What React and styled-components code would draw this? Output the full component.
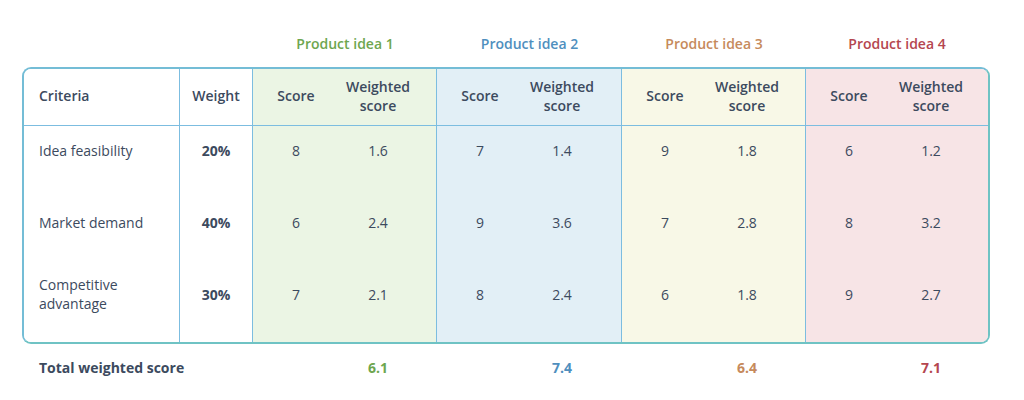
import styled, { createGlobalStyle } from 'styled-components';

const ideas = [
  { name: 'Product idea 1', text: '#6ea64f', bg: '#ebf5e4', scores: [8, 6, 7], weighted: ['1.6', '2.4', '2.1'], total: '6.1' },
  { name: 'Product idea 2', text: '#4f8fbe', bg: '#e2eff6', scores: [7, 9, 8], weighted: ['1.4', '3.6', '2.4'], total: '7.4' },
  { name: 'Product idea 3', text: '#c68a5c', bg: '#f8f8e7', scores: [9, 7, 6], weighted: ['1.8', '2.8', '1.8'], total: '6.4' },
  { name: 'Product idea 4', text: '#b5464f', bg: '#f7e4e6', scores: [6, 8, 9], weighted: ['1.2', '3.2', '2.7'], total: '7.1' },
];

const criteria = [
  { label: 'Idea feasibility', weight: '20%' },
  { label: 'Market demand', weight: '40%' },
  { label: 'Competitive\nadvantage', weight: '30%' },
];

function App() {
  return (
    <Page>
      <GlobalStyle />
      <Labels>
        <span />
        <span />
        {ideas.map(idea => (
          <IdeaLabel key={idea.name} color={idea.text}>
            {idea.name}
          </IdeaLabel>
        ))}
      </Labels>

      <Table>
        <HeadCell>
          <Criteria>Criteria</Criteria>
        </HeadCell>
        <HeadCell center>Weight</HeadCell>
        {ideas.map((idea, i) => (
          <HeadCell key={idea.name} tint={idea.bg} last={i === 3}>
            <Pair>
              <ScoreSlot>Score</ScoreSlot>
              <WeightedSlot>
                Weighted
                <br />
                score
              </WeightedSlot>
            </Pair>
          </HeadCell>
        ))}

        {criteria.map((row, r) => (
          <Row key={row.label}>
            <BodyCell>
              <Criteria light>{row.label}</Criteria>
            </BodyCell>
            <BodyCell center>
              <strong>{row.weight}</strong>
            </BodyCell>
            {ideas.map((idea, i) => (
              <BodyCell key={idea.name} tint={idea.bg} last={i === 3}>
                <Pair>
                  <ScoreSlot>{idea.scores[r]}</ScoreSlot>
                  <WeightedSlot>{idea.weighted[r]}</WeightedSlot>
                </Pair>
              </BodyCell>
            ))}
          </Row>
        ))}
      </Table>

      <Totals>
        <TotalLabel>Total weighted score</TotalLabel>
        <span />
        {ideas.map(idea => (
          <Pair key={idea.name}>
            <ScoreSlot />
            <TotalValue color={idea.text}>{idea.total}</TotalValue>
          </Pair>
        ))}
      </Totals>
    </Page>
  );
}

export default App;

const GlobalStyle = createGlobalStyle`
  body {
    margin: 0;
    background: #ffffff;
    font-family: "Open Sans", "Noto Sans", sans-serif;
    color: #3c4a5e;
  }
`;

const columns = '156px 73px 184px 185px 184px 182px';

const Page = styled.main`
  width: 1024px;
  height: 400px;
  padding: 34px 0 0 22px;
  box-sizing: border-box;
`;

// product labels above the table
const Labels = styled.div`
  display: grid;
  grid-template-columns: ${columns};
  width: 968px;
  padding: 0 2px;
  box-sizing: border-box;
  height: 20px;
  margin-bottom: 13px;
`;

const IdeaLabel = styled.div`
  text-align: center;
  font-size: 14px;
  font-weight: 600;
  line-height: 20px;
  color: ${props => props.color};
`;

// table
const Table = styled.section`
  display: grid;
  grid-template-columns: ${columns};
  width: 968px;
  box-sizing: border-box;
  border: 2px solid #74bdd6;
  border-right-color: #6fc3c4;
  border-bottom-color: #6fc3c4;
  border-radius: 9px;
  overflow: hidden;
  font-size: 14px;
`;

const Row = styled.div`
  display: contents;
`;

const Cell = styled.div`
  display: flex;
  align-items: center;
  justify-content: ${props => (props.center ? 'center' : 'flex-start')};
  background: ${props => props.tint || '#ffffff'};
  border-right: ${props => (props.last ? 'none' : '1.5px solid #7cbde0')};
  box-sizing: border-box;
`;

const HeadCell = styled(Cell)`
  height: 57px;
  border-bottom: 1.5px solid #7cbde0;
  font-weight: 600;
  line-height: 19px;
  padding-bottom: 3px;
`;

const BodyCell = styled(Cell)`
  height: 72px;
  padding-bottom: 24px;
  line-height: 19px;

  strong {
    font-weight: 700;
  }
`;

const Criteria = styled.div`
  padding-left: 15px;
  font-weight: ${props => (props.light ? 400 : 600)};
  white-space: pre-line;
`;

const Pair = styled.div`
  display: flex;
  width: 100%;
  align-items: center;
`;

const ScoreSlot = styled.div`
  width: 86px;
  text-align: center;
`;

const WeightedSlot = styled.div`
  width: 78px;
  text-align: center;
`;

// totals
const Totals = styled.div`
  display: grid;
  grid-template-columns: ${columns};
  width: 968px;
  padding: 0 2px;
  box-sizing: border-box;
  margin-top: 14px;
  font-size: 14px;
  font-weight: 700;
  line-height: 20px;
`;

const TotalLabel = styled.div`
  padding-left: 15px;
  white-space: nowrap;
`;

const TotalValue = styled(WeightedSlot)`
  color: ${props => props.color};
`;
